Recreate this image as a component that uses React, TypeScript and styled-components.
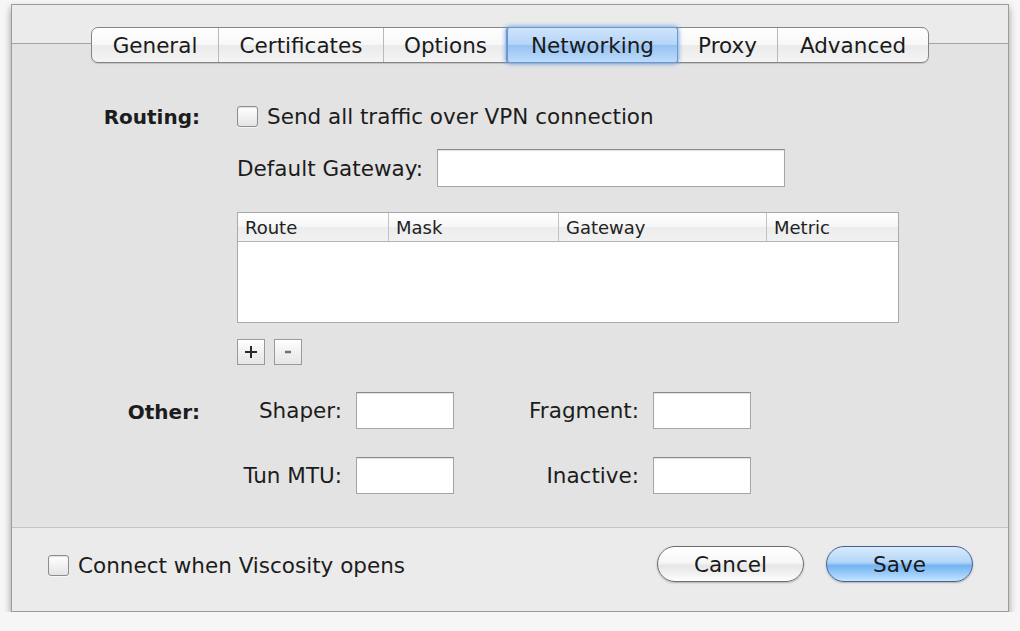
import * as React from 'react';
import styled, { createGlobalStyle } from 'styled-components';

const GlobalStyle = createGlobalStyle`
  html, body {
    margin: 0;
    padding: 0;
    background: #f6f6f6;
  }
  body {
    font-family: 'DejaVu Sans', 'Liberation Sans', sans-serif;
    color: #1c1c1c;
  }
`;

const Window = styled.div`
  box-sizing: border-box;
  width: 998px;
  height: 608px;
  margin: 4px 0 0 11px;
  border: 1px solid #9c9c9c;
  background: #ebebeb;
  box-shadow: 0 4px 7px rgba(0, 0, 0, 0.38);
  display: flex;
  flex-direction: column;
`;

const TabBox = styled.div`
  margin-top: 38px;
  height: 485px;
  box-sizing: border-box;
  border-top: 1px solid #a4a4a4;
  border-bottom: 1px solid #c4c4c4;
  background: #e3e3e3;
  display: flex;
  flex-direction: column;
`;

const TabBar = styled.div`
  align-self: center;
  margin-top: -17px;
  height: 36px;
  box-sizing: border-box;
  display: flex;
  border: 1px solid #858585;
  border-radius: 7px;
  background: linear-gradient(#ffffff, #f7f7f7 50%, #ebebeb 51%, #f4f4f4);
  box-shadow: 0 1px 1px rgba(0, 0, 0, 0.15);
`;

const Tab = styled.div<{ $active?: boolean; $w: number }>`
  width: ${(p) => p.$w}px;
  box-sizing: border-box;
  display: flex;
  align-items: center;
  justify-content: center;
  font-size: 21.5px;
  color: #1a1a1a;
  border-left: 1px solid #b9b9b9;
  &:first-child {
    border-left: none;
    border-radius: 6px 0 0 6px;
  }
  &:last-child {
    border-radius: 0 6px 6px 0;
  }
  ${(p) =>
    p.$active &&
    `
    position: relative;
    border-left-color: #6f93c6;
    background: linear-gradient(#cfe4fb, #b4d4f7 50%, #96c2f2 51%, #bcdcfb);
    box-shadow: 0 0 0 1px #6e97d0, 0 0 4px 2px rgba(90, 150, 230, 0.75);
    border-radius: 3px;
    z-index: 1;
  `}
`;

const Form = styled.div`
  display: grid;
  grid-template-columns: 188px 1fr;
  column-gap: 37px;
  margin-top: 42px;
`;

const SectionLabel = styled.div<{ $top: number }>`
  font-size: 20px;
  font-weight: bold;
  text-align: right;
  padding-top: ${(p) => p.$top}px;
`;

const Column = styled.div`
  display: flex;
  flex-direction: column;
`;

const CheckRow = styled.label`
  display: flex;
  align-items: center;
  gap: 9px;
  font-size: 21.5px;
  height: 22px;
`;

const Check = styled.span`
  width: 21px;
  height: 21px;
  box-sizing: border-box;
  border: 1px solid #8d8d8d;
  border-radius: 3px;
  background: linear-gradient(#ffffff, #f1f1f1 55%, #e4e4e4);
  box-shadow: inset 0 1px 1px rgba(0, 0, 0, 0.12), 0 1px 0 rgba(255, 255, 255, 0.6);
  flex-shrink: 0;
`;

const FieldRow = styled.div`
  display: flex;
  align-items: center;
  gap: 14px;
  margin-top: 22px;
  font-size: 21.5px;
`;

const TextField = styled.div<{ $w: number; $h?: number }>`
  width: ${(p) => p.$w}px;
  height: ${(p) => p.$h ?? 38}px;
  box-sizing: border-box;
  background: #ffffff;
  border: 1px solid #a6a6a6;
  border-top-color: #8a8a8a;
  box-shadow: inset 0 1px 1px rgba(0, 0, 0, 0.12);
`;

const Table = styled.div`
  margin-top: 25px;
  width: 662px;
  height: 111px;
  box-sizing: border-box;
  border: 1px solid #a9a9a9;
  background: #ffffff;
`;

const HeaderRow = styled.div`
  display: grid;
  grid-template-columns: 150px 170px 208px 1fr;
  height: 29px;
  box-sizing: border-box;
  border-bottom: 1px solid #b4b4b4;
  background: linear-gradient(#ffffff, #f6f6f6 50%, #ececec 51%, #f2f2f2);
`;

const HeaderCell = styled.div`
  display: flex;
  align-items: center;
  padding-left: 7px;
  font-size: 18px;
  color: #222;
  border-left: 1px solid #c2c2c2;
  &:first-child {
    border-left: none;
  }
`;

const SmallButtons = styled.div`
  display: flex;
  gap: 9px;
  margin-top: 16px;
`;

const SquareButton = styled.div`
  width: 28px;
  height: 26px;
  box-sizing: border-box;
  border: 1px solid #9a9a9a;
  background: linear-gradient(#ffffff, #f1f1f1 50%, #e6e6e6);
  display: flex;
  align-items: center;
  justify-content: center;
`;

const OtherGrid = styled.div`
  display: grid;
  grid-template-columns: 105px 98px 171px 98px;
  column-gap: 14px;
  row-gap: 28px;
  margin-top: 27px;
  align-items: center;
  font-size: 21.5px;
`;

const FieldLabel = styled.div`
  text-align: right;
  white-space: nowrap;
`;

const BottomBar = styled.div`
  flex: 1;
  display: flex;
  align-items: flex-start;
  padding: 18px 35px 0 36px;
`;

const Spacer = styled.div`
  flex: 1;
`;

const PillButton = styled.div<{ $primary?: boolean }>`
  width: 147px;
  height: 36px;
  box-sizing: border-box;
  border-radius: 18px;
  display: flex;
  align-items: center;
  justify-content: center;
  font-size: 21.5px;
  color: #1a1a1a;
  border: 1px solid ${(p) => (p.$primary ? '#4a5f92' : '#6d6d6d')};
  background: ${(p) =>
    p.$primary
      ? 'linear-gradient(#d9ebfc, #b1d5f8 45%, #74b3f2 55%, #a5d3fb 85%, #c7e6ff)'
      : 'linear-gradient(#ffffff, #f7f7f7 45%, #e6e6e6 55%, #f5f5f5 85%, #ffffff)'};
  box-shadow: 0 1px 2px rgba(0, 0, 0, 0.25);
  & + & {
    margin-left: 22px;
  }
`;

const BottomCheck = styled(CheckRow)`
  margin-top: 8px;
`;

const tabs = [
  { name: 'General', w: 126 },
  { name: 'Certificates', w: 165 },
  { name: 'Options', w: 124 },
  { name: 'Networking', w: 170, active: true },
  { name: 'Proxy', w: 100 },
  { name: 'Advanced', w: 151 },
];

const App: React.FC = () => (
  <>
    <GlobalStyle />
    <Window>
      <TabBox>
        <TabBar>
          {tabs.map((t) => (
            <Tab key={t.name} $w={t.w} $active={t.active}>
              {t.name}
            </Tab>
          ))}
        </TabBar>
        <Form>
          <SectionLabel $top={0}>Routing:</SectionLabel>
          <Column>
            <CheckRow>
              <Check />
              Send all traffic over VPN connection
            </CheckRow>
            <FieldRow>
              Default Gateway:
              <TextField $w={348} />
            </FieldRow>
            <Table>
              <HeaderRow>
                <HeaderCell>Route</HeaderCell>
                <HeaderCell>Mask</HeaderCell>
                <HeaderCell>Gateway</HeaderCell>
                <HeaderCell>Metric</HeaderCell>
              </HeaderRow>
            </Table>
            <SmallButtons>
              <SquareButton>
                <svg width="14" height="14" viewBox="0 0 14 14">
                  <path d="M7 1v12M1 7h12" stroke="#2a2a2a" strokeWidth="2" />
                </svg>
              </SquareButton>
              <SquareButton>
                <svg width="12" height="12" viewBox="0 0 12 12">
                  <path d="M3 6h6" stroke="#707070" strokeWidth="2.5" />
                </svg>
              </SquareButton>
            </SmallButtons>
          </Column>
          <SectionLabel $top={35}>Other:</SectionLabel>
          <OtherGrid>
            <FieldLabel>Shaper:</FieldLabel>
            <TextField $w={98} $h={37} />
            <FieldLabel>Fragment:</FieldLabel>
            <TextField $w={98} $h={37} />
            <FieldLabel>Tun MTU:</FieldLabel>
            <TextField $w={98} $h={37} />
            <FieldLabel>Inactive:</FieldLabel>
            <TextField $w={98} $h={37} />
          </OtherGrid>
        </Form>
      </TabBox>
      <BottomBar>
        <BottomCheck>
          <Check />
          Connect when Viscosity opens
        </BottomCheck>
        <Spacer />
        <PillButton>Cancel</PillButton>
        <PillButton $primary>Save</PillButton>
      </BottomBar>
    </Window>
  </>
);

export default App;
